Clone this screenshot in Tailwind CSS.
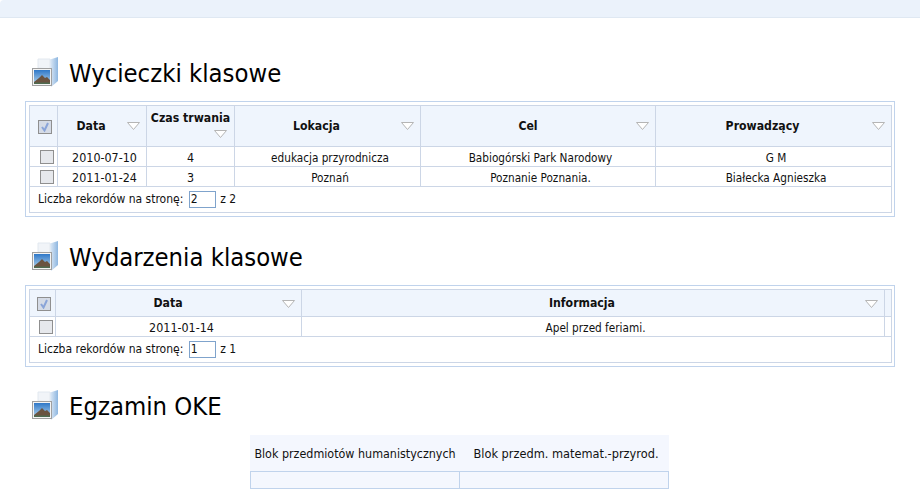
<!DOCTYPE html>
<html lang="pl">
<head>
    <meta charset="UTF-8">
    <title>Klasa</title>
    <script src="https://cdn.jsdelivr.net/npm/@tailwindcss/browser@4"></script>
</head>
<body class="bg-white h-[498px] overflow-hidden font-['DejaVu_Sans_Condensed','DejaVu_Sans',sans-serif] text-[11.7px] leading-[16px] text-[#111]">
    <!-- Top bar -->
    <div class="h-[18px] bg-[#ebf2fb] border-b border-[#dfe8f2] rounded-tl-[4px]"></div>

    <!-- Wycieczki klasowe -->
    <div class="flex items-center h-[32px] mt-[39px] ml-[31px] gap-[10px]">
        <svg width="28" height="32" viewBox="0 0 28 32">
            <defs>
                <linearGradient id="fold" x1="0" y1="0" x2="1" y2="0"><stop offset="0" stop-color="#dfeaf6"/><stop offset="1" stop-color="#8db6e0"/></linearGradient>
                <linearGradient id="sky" x1="0" y1="0" x2="0" y2="1"><stop offset="0" stop-color="#2f78c8"/><stop offset="1" stop-color="#b5d5ec"/></linearGradient>
            </defs>
            <path d="M7 11V2H19V12Z" fill="#f1f4f8" stroke="#e2e8ef"/>
            <path d="M19 2.5L27 0V24L20 30Z" fill="url(#fold)"/>
            <rect x="1.5" y="11.5" width="19" height="17" fill="#f4f4f4" stroke="#a0a0a0"/>
            <rect x="3" y="13" width="16" height="14" fill="url(#sky)"/>
            <path d="M3 25L8 21L11 18L14 21L16 20L19 23V27H3Z" fill="#6a5340"/>
            <path d="M3 25.5H19V27H3Z" fill="#4e6b50"/>
        </svg>
        <h2 class="text-[25.4px] leading-[32px] text-[#000]">Wycieczki klasowe</h2>
    </div>
    <div class="mt-[12px] mx-[25px] border border-[#c0d3ec] p-[3px]">
        <table class="table-fixed w-[862px] border-collapse border border-[#ccd6e6] text-center">
            <colgroup><col class="w-[28px]"><col class="w-[89px]"><col class="w-[88px]"><col class="w-[186px]"><col class="w-[235px]"><col class="w-[236px]"></colgroup>
            <thead>
                <tr class="h-[41px] bg-[#eff5fd] font-bold text-[12.2px]">
                    <th class="border border-[#ccd6e6]">
                        <span class="inline-flex align-middle items-center justify-center ml-[2px] size-[14px] border border-[#8f8f8f] bg-[#d5dbe6]"><svg width="10" height="10" viewBox="0 0 10 10"><path d="M2 5L4.5 8.5L8 1" fill="none" stroke="#8aa4d8" stroke-width="2"/></svg></span>
                    </th>
                    <th class="border border-[#ccd6e6] relative pr-[22px]">Data<svg class="absolute right-[6px] top-[16px]" width="13" height="8" viewBox="0 0 13 8"><path d="M.5.5H12.5L6.5 7.5Z" fill="#fff" stroke="#b5b5b5"/></svg></th>
                    <th class="border border-[#ccd6e6] relative align-top pt-[5px] leading-[15px]">Czas trwania<svg class="block mt-[4px] ml-[67px]" width="13" height="8" viewBox="0 0 13 8"><path d="M.5.5H12.5L6.5 7.5Z" fill="#fff" stroke="#b5b5b5"/></svg></th>
                    <th class="border border-[#ccd6e6] relative pr-[22px]">Lokacja<svg class="absolute right-[6px] top-[16px]" width="13" height="8" viewBox="0 0 13 8"><path d="M.5.5H12.5L6.5 7.5Z" fill="#fff" stroke="#b5b5b5"/></svg></th>
                    <th class="border border-[#ccd6e6] relative pr-[20px]">Cel<svg class="absolute right-[6px] top-[16px]" width="13" height="8" viewBox="0 0 13 8"><path d="M.5.5H12.5L6.5 7.5Z" fill="#fff" stroke="#b5b5b5"/></svg></th>
                    <th class="border border-[#ccd6e6] relative pr-[22px]">Prowadzący<svg class="absolute right-[6px] top-[16px]" width="13" height="8" viewBox="0 0 13 8"><path d="M.5.5H12.5L6.5 7.5Z" fill="#fff" stroke="#b5b5b5"/></svg></th>
                </tr>
            </thead>
            <tbody>
                <tr class="h-[20px]">
                    <td class="border border-[#ccd6e6]"><span class="inline-block align-middle ml-[6px] size-[14px] border border-[#8f8f8f] bg-[#e6e8ec]"></span></td>
                    <td class="border border-[#ccd6e6] pt-[2px] pl-[5px] text-[12.4px]">2010-07-10</td>
                    <td class="border border-[#ccd6e6] pt-[2px] text-[12.4px]">4</td>
                    <td class="border border-[#ccd6e6] pt-[2px] pl-[5px]">edukacja przyrodnicza</td>
                    <td class="border border-[#ccd6e6] pt-[2px] pl-[5px]">Babiogórski Park Narodowy</td>
                    <td class="border border-[#ccd6e6] pt-[2px] pl-[5px]">G M</td>
                </tr>
                <tr class="h-[20px]">
                    <td class="border border-[#ccd6e6]"><span class="inline-block align-middle ml-[6px] size-[14px] border border-[#8f8f8f] bg-[#e6e8ec]"></span></td>
                    <td class="border border-[#ccd6e6] pt-[2px] pl-[5px] text-[12.4px]">2011-01-24</td>
                    <td class="border border-[#ccd6e6] pt-[2px] text-[12.4px]">3</td>
                    <td class="border border-[#ccd6e6] pt-[2px] pl-[5px]">Poznań</td>
                    <td class="border border-[#ccd6e6] pt-[2px] pl-[5px]">Poznanie Poznania.</td>
                    <td class="border border-[#ccd6e6] pt-[2px] pl-[5px]">Białecka Agnieszka</td>
                </tr>
                <tr class="h-[26px]">
                    <td colspan="6" class="border border-[#ccd6e6] text-left pl-[8px] text-[12px]">Liczba rekordów na stronę: <span class="inline-block align-middle ml-[2px] mr-[1px] w-[27px] h-[17px] border border-[#7fa3cc] leading-[15px] pl-[1px]">2</span> z 2</td>
                </tr>
            </tbody>
        </table>
    </div>

    <!-- Wydarzenia klasowe -->
    <div class="flex items-center h-[32px] mt-[24px] ml-[31px] gap-[10px]">
        <svg width="28" height="32" viewBox="0 0 28 32">
            <path d="M7 11V2H19V12Z" fill="#f1f4f8" stroke="#e2e8ef"/>
            <path d="M19 2.5L27 0V24L20 30Z" fill="url(#fold)"/>
            <rect x="1.5" y="11.5" width="19" height="17" fill="#f4f4f4" stroke="#a0a0a0"/>
            <rect x="3" y="13" width="16" height="14" fill="url(#sky)"/>
            <path d="M3 25L8 21L11 18L14 21L16 20L19 23V27H3Z" fill="#6a5340"/>
            <path d="M3 25.5H19V27H3Z" fill="#4e6b50"/>
        </svg>
        <h2 class="text-[25.4px] leading-[32px] text-[#000]">Wydarzenia klasowe</h2>
    </div>
    <div class="mt-[12px] mx-[25px] border border-[#c0d3ec] p-[3px]">
        <table class="table-fixed w-[862px] border-collapse border border-[#ccd6e6] text-center">
            <colgroup><col class="w-[26px]"><col class="w-[246px]"><col class="w-[583px]"><col class="w-[7px]"></colgroup>
            <thead>
                <tr class="h-[27px] bg-[#eff5fd] font-bold text-[12.2px]">
                    <th class="border border-[#ccd6e6]">
                        <span class="inline-flex align-middle items-center justify-center ml-[2px] size-[14px] border border-[#8f8f8f] bg-[#d5dbe6]"><svg width="10" height="10" viewBox="0 0 10 10"><path d="M2 5L4.5 8.5L8 1" fill="none" stroke="#8aa4d8" stroke-width="2"/></svg></span>
                    </th>
                    <th class="border border-[#ccd6e6] relative pr-[21px]">Data<svg class="absolute right-[6px] top-[10px]" width="13" height="8" viewBox="0 0 13 8"><path d="M.5.5H12.5L6.5 7.5Z" fill="#fff" stroke="#b5b5b5"/></svg></th>
                    <th class="border border-[#ccd6e6] relative pr-[22px]">Informacja<svg class="absolute right-[6px] top-[10px]" width="13" height="8" viewBox="0 0 13 8"><path d="M.5.5H12.5L6.5 7.5Z" fill="#fff" stroke="#b5b5b5"/></svg></th>
                    <th class="border border-[#ccd6e6]"></th>
                </tr>
            </thead>
            <tbody>
                <tr class="h-[20px]">
                    <td class="border border-[#ccd6e6]"><span class="inline-block align-middle ml-[6px] size-[14px] border border-[#8f8f8f] bg-[#e6e8ec]"></span></td>
                    <td class="border border-[#ccd6e6] pt-[2px] pl-[6px] text-[12.4px]">2011-01-14</td>
                    <td class="border border-[#ccd6e6] pt-[2px] pl-[5px]">Apel przed feriami.</td>
                    <td class="border border-[#ccd6e6]"></td>
                </tr>
                <tr class="h-[26px]">
                    <td colspan="4" class="border border-[#ccd6e6] text-left pl-[8px] text-[12px]">Liczba rekordów na stronę: <span class="inline-block align-middle ml-[2px] mr-[1px] w-[27px] h-[17px] border border-[#7fa3cc] leading-[15px] pl-[1px]">1</span> z 1</td>
                </tr>
            </tbody>
        </table>
    </div>

    <!-- Egzamin OKE -->
    <div class="flex items-center h-[32px] mt-[23px] ml-[31px] gap-[10px]">
        <svg width="28" height="32" viewBox="0 0 28 32">
            <path d="M7 11V2H19V12Z" fill="#f1f4f8" stroke="#e2e8ef"/>
            <path d="M19 2.5L27 0V24L20 30Z" fill="url(#fold)"/>
            <rect x="1.5" y="11.5" width="19" height="17" fill="#f4f4f4" stroke="#a0a0a0"/>
            <rect x="3" y="13" width="16" height="14" fill="url(#sky)"/>
            <path d="M3 25L8 21L11 18L14 21L16 20L19 23V27H3Z" fill="#6a5340"/>
            <path d="M3 25.5H19V27H3Z" fill="#4e6b50"/>
        </svg>
        <h2 class="text-[25.4px] leading-[32px] text-[#000]">Egzamin OKE</h2>
    </div>
    <table class="table-fixed w-[418px] mt-[13px] ml-[250px] border-collapse text-center bg-[#f4f7fe]">
        <colgroup><col class="w-[209px]"><col class="w-[209px]"></colgroup>
        <tr class="h-[36px]"><td class="pt-[3px] text-[12.4px]">Blok przedmiotów humanistycznych</td><td class="pt-[3px] pl-[4px] text-[12.65px]">Blok przedm. matemat.-przyrod.</td></tr>
        <tr class="h-[17px]"><td class="border border-[#c0d3ec]"></td><td class="border border-[#c0d3ec]"></td></tr>
    </table>
</body>
</html>
